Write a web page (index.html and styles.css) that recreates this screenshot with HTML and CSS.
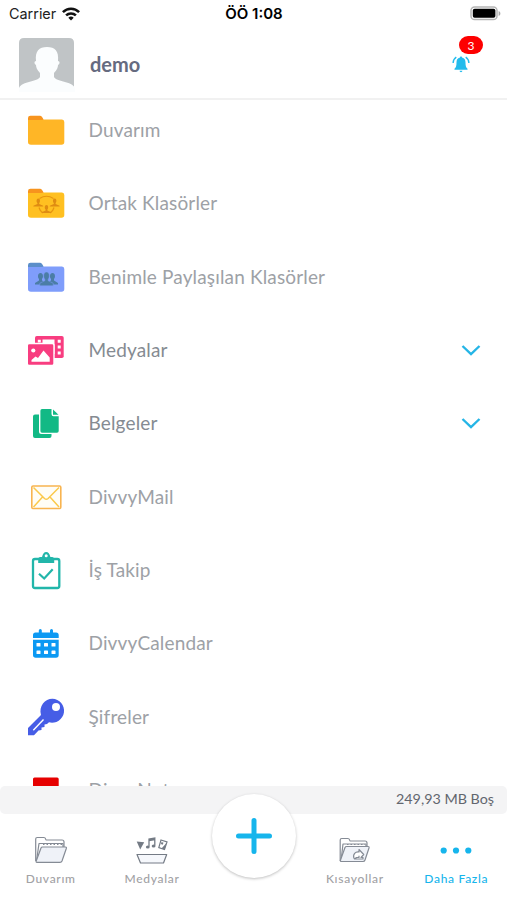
FILE: index.html
```html
<!DOCTYPE html>
<html lang="tr">
<head>
    <meta charset="UTF-8">
    <meta name="viewport" content="width=device-width, initial-scale=1.0">
    <title>Daha Fazla</title>
    <link rel="stylesheet" href="styles.css">
</head>
<body>
    <div class="app">
        <div class="status-bar">
            <div class="carrier">
                <span>Carrier</span>
                <svg width="18" height="14" viewBox="0 0 18 14">
                    <g fill="none" stroke="#111" stroke-width="2.5">
                        <path d="M.9 5.1C5.4.5 12.6.5 17.1 5.1"/>
                        <path d="M4.1 8.4C6.8 5.7 11.2 5.7 13.9 8.4"/>
                    </g>
                    <path fill="#111" d="M6.3 10.7Q9 8.3 11.7 10.7L9 13.6z"/>
                </svg>
            </div>
            <div class="time">ÖÖ 1:08</div>
            <div class="battery">
                <svg width="31" height="15" viewBox="0 0 31 15">
                    <rect x="1" y="1" width="26" height="12.6" rx="3.6" fill="#fff" stroke="#b5b5b5" stroke-width="1.5"/>
                    <rect x="2.8" y="2.8" width="22.6" height="9" rx="1.8" fill="#000"/>
                    <path fill="#aaa" d="M28.6 5v5c2.4-1 2.4-4 0-5z"/>
                </svg>
            </div>
        </div>

        <div class="header">
            <svg class="avatar" width="56" height="54" viewBox="0 0 56 54">
                <path fill="#c0c4c6" d="M0 51V5Q0 0 5 0H50Q55 0 55 5V51z"/>
                <path fill="#fbfdfe" d="M0 54V50C3 43 19 44 21 39V35C18 32 17 29 17 27C15 26 15 23 17 23C16 13 20 9 28 9S40 13 39 23C41 23 41 26 39 27C39 29 38 32 35 35V39C37 44 53 43 56 50V54z"/>
            </svg>
            <div class="username">demo</div>
            <div class="notification">
                <svg width="18" height="17" viewBox="0 0 18 17">
                    <g fill="#22bbec">
                        <path d="M9 .4C9.7.4 10 .8 10 1.4C12.7 2 13.5 4 13.5 6.5C13.5 10 14 11.5 15.5 12.8V13.8H2.5V12.8C4 11.5 4.5 10 4.5 6.5C4.5 4 5.3 2 8 1.4C8 .8 8.3.4 9 .4z"/>
                        <path d="M7.6 14.7H10.4C10.4 16.6 7.6 16.6 7.6 14.7z"/>
                    </g>
                    <path fill="none" stroke="#22bbec" stroke-width="1.4" d="M4.3 1.2C2.2 2.5 1.2 4.500 1.100 7M13.700 1.200C15.800 2.500 16.800 4.500 16.900 7"/>
                </svg>
                <span class="badge">3</span>
            </div>
        </div>

        <div class="content">
            <ul class="menu">
                <li>
                    <svg class="icon" viewBox="0 0 40 40">
                        <path fill="#f7941e" d="M2 12V8Q2 5.700 4.500 5.700H14Q16 5.700 17.500 9.500L18 12z"/>
                        <path fill="#ffb626" d="M2 10H15L18.500 9.500H36Q38.300 9.500 38.300 12V32Q38.300 34.700 35.500 34.700H5Q2 34.700 2 32z"/>
                    </svg>
                    <span>Duvarım</span>
                </li>
                <li>
                    <svg class="icon" viewBox="0 0 40 40">
                        <path fill="#f7941e" d="M2 12V8Q2 5.700 4.500 5.700H14Q16 5.700 17.500 9.500L18 12z"/>
                        <path fill="#ffc021" d="M2 10H15L18.500 9.500H36Q38.300 9.500 38.300 12V32Q38.300 34.700 35.500 34.700H5Q2 34.700 2 32z"/>
                        <path fill="none" stroke="#e8950f" stroke-width="1.200" d="M13.500 15.500Q20.500 11 27.500 15.500M13 24.500Q14 28.500 17 30M28 24.500Q27 28.500 24 30"/>
                        <g fill="#df8c12">
                            <path id="person" d="M12.300 15.500c2.200 0 2 3.500.9 4.500v1l4 1.700v.9h-9.800v-.9l4-1.700v-1c-1.100-1-1.300-4.500.9-4.500z"/>
                            <use href="#person" x="16.400"/>
                            <use href="#person" x="8.200" y="6.500"/>
                        </g>
                    </svg>
                    <span>Ortak Klasörler</span>
                </li>
                <li>
                    <svg class="icon" viewBox="0 0 40 40">
                        <path fill="#5b8ec9" d="M2 12V8Q2 5.700 4.500 5.700H14Q16 5.700 17.500 9.500L18 12z"/>
                        <path fill="#7f9dfb" d="M2 10H15L18.500 9.500H36Q38.300 9.500 38.300 12V32Q38.300 34.700 35.500 34.700H5Q2 34.700 2 32z"/>
                        <g fill="#4b7da6">
                            <path d="M14.500 16c3 0 3 4.500 1.500 6v1.500l3 1.500v2.500H9V26l4-2.500V22c-1.500-1.500-1.500-6 1.500-6z"/>
                            <path d="M26.500 16c-3 0-3 4.500-1.500 6v1.500L22 25v2.500h10V26l-4-2.500V22c1.500-1.500 1.500-6-1.500-6z"/>
                            <path stroke="#7f9dfb" stroke-width=".5" d="M20.500 15c3.500 0 3.400 5.500 1.700 7.200v1.600l5 2.400v2.600H13.800v-2.600l5-2.400v-1.600C17.100 20.500 17 15 20.500 15z"/>
                        </g>
                    </svg>
                    <span>Benimle Paylaşılan Klasörler</span>
                </li>
                <li class="dark">
                    <svg class="icon" viewBox="0 0 40 40">
                        <rect x="9" y="6" width="28.700" height="22" rx="1.800" fill="#f83d80"/>
                        <path fill="#fff" d="M16.500 9.500H28.500V24H25V14.500H16.500zM11.800 9.800h3v2.700h-3zM31.700 9.800h3v3h-3zM31.700 15.600h3v3h-3zM31.700 21.400h3v3h-3z"/>
                        <rect x="1.300" y="13.500" width="26.700" height="22" rx="2" fill="#f83d80" stroke="#fff" stroke-width="1.400"/>
                        <circle cx="7.300" cy="20.500" r="2.100" fill="#fff"/>
                        <path fill="#fff" d="M5.500 31.800V30L9.500 26.500L12 28L17.500 20.500L23.700 27.500V31.800z"/>
                    </svg>
                    <span>Medyalar</span>
                    <svg class="chevron" viewBox="0 0 20 12"><path d="M1.500 2L10 10L18.500 2"/></svg>
                </li>
                <li class="dark">
                    <svg class="icon" viewBox="0 0 40 40">
                        <path fill="#12b985" d="M9 11.500H13V28.500Q13 31 15.500 31H25.500V33Q25.500 35 23.500 35H9Q7 35 7 33V13.500Q7 11.500 9 11.500z"/>
                        <path fill="#12b985" d="M16 6H25.500V11Q25.500 13.300 27.500 13.300H32.700V28Q32.700 29.800 31 29.800H16Q14.400 29.800 14.400 28V7.800Q14.400 6 16 6z"/>
                        <path fill="#12b985" d="M27 6.500L32.500 11.800H27z"/>
                    </svg>
                    <span>Belgeler</span>
                    <svg class="chevron" viewBox="0 0 20 12"><path d="M1.500 2L10 10L18.500 2"/></svg>
                </li>
                <li>
                    <svg class="icon" viewBox="0 0 40 40">
                        <rect x="5.800" y="9" width="29" height="22.500" rx="1.300" fill="#fffdf6" stroke="#f8b450" stroke-width="1.600"/>
                        <path fill="none" stroke="#fbc94b" stroke-width="1.500" d="M7.500 10.500L18.500 21.500Q20.300 23 22.100 21.500L33 10.500M7.500 30L16.500 20M33 30L24 20"/>
                    </svg>
                    <span>DivvyMail</span>
                </li>
                <li>
                    <svg class="icon" viewBox="0 0 40 40">
                        <rect x="7" y="9" width="26.300" height="29" rx="2" fill="#fff" stroke="#22b6aa" stroke-width="2.300"/>
                        <path fill="#22b6aa" d="M12.200 13V9Q12.200 7.500 14 7H16C17 3.500 18 2 20.200 2S23.500 3.500 24.400 7H26.300Q28.200 7.500 28.200 9V13z"/>
                        <circle cx="20.200" cy="5.800" r="1.500" fill="#fff"/>
                        <path fill="none" stroke="#22b6aa" stroke-width="2.200" d="M13 23.800L18.200 28.500L26.700 19.300"/>
                    </svg>
                    <span>İş Takip</span>
                </li>
                <li>
                    <svg class="icon" viewBox="0 0 40 40">
                        <path fill="#0c99f3" d="M9.500 9.500H12.800V7.500Q12.800 6 14.300 6T15.800 7.500V9.500H24V7.500Q24 6 25.500 6T27 7.500V9.500H30Q32.700 9.500 32.700 12V15H7V12Q7 9.500 9.500 9.500zM7 16.700H32.700V32Q32.700 34.700 30 34.700H9.700Q7 34.700 7 32z"/>
                        <g fill="#fff">
                            <rect x="10.500" y="20" width="4" height="3.500" rx=".6"/>
                            <rect x="18" y="20" width="4" height="3.500" rx=".6"/>
                            <rect x="25.500" y="20" width="4" height="3.500" rx=".6"/>
                            <rect x="10.500" y="27.500" width="4" height="3.500" rx=".6"/>
                            <rect x="18" y="27.500" width="4" height="3.500" rx=".6"/>
                            <rect x="25.500" y="27.500" width="4" height="3.500" rx=".6"/>
                        </g>
                    </svg>
                    <span>DivvyCalendar</span>
                </li>
                <li>
                    <svg class="icon" viewBox="0 0 40 40">
                        <path fill="#465de6" d="M26.400 1.700A12 12 0 1 1 23 25.300L21 27L18.500 27.500V30L15.500 30.500V33L12.500 33.500L8 38.300H2V31L15 18C12.500 9 19 1.700 26.400 1.700z"/>
                        <circle cx="30" cy="10" r="4" fill="#fff"/>
                        <path stroke="#fff" stroke-width="1.400" d="M7.300 33.200L17.500 22.500"/>
                    </svg>
                    <span>Şifreler</span>
                </li>
                <li>
                    <svg class="icon" viewBox="0 0 40 40">
                        <rect x="7" y="7.500" width="25.700" height="27" rx="1.500" fill="#e60000"/>
                    </svg>
                    <span>DivvyNote</span>
                </li>
            </ul>
        </div>

        <div class="storage">249,93 MB Boş</div>

        <div class="tabs">
            <div class="tab">
                <svg viewBox="0 0 36 30">
                    <g fill="#fff" stroke="#858b95" stroke-width="1.200" stroke-linejoin="round">
                        <path d="M2.700 26V4Q2.700 2.500 4.200 2.500H11Q12.500 2.500 13 5H29Q31 5 31 7V12"/>
                        <path d="M3.500 26L6 8.500H30V14"/>
                        <path fill="#eff2f8" d="M9.500 12H32.500Q33.700 12 33.300 13.500L29 26Q28.500 27.300 27 27.300H4Q2.700 27.300 3.200 26L8 13Q8.400 12 9.500 12z"/>
                        <path stroke-dasharray="1.500 2" d="M10 9.500H29"/>
                    </g>
                </svg>
                <span>Duvarım</span>
            </div>
            <div class="tab">
                <svg viewBox="0 0 36 30">
                    <path fill="#747b85" d="M2.700 6.500L10.200 7.300L6.200 14.600z"/>
                    <path fill="none" stroke="#747b85" stroke-width="1.300" d="M15 11.500V4L20.800 3V10.500M15 5.500L20.800 4.500"/>
                    <ellipse cx="13.800" cy="12" rx="1.900" ry="1.500" fill="#747b85"/>
                    <ellipse cx="19.600" cy="11" rx="1.900" ry="1.500" fill="#747b85"/>
                    <path fill="#fff" stroke="#747b85" stroke-width="1.200" d="M27 5L33 7L30.500 14.500L24.800 12.600z"/>
                    <path fill="#747b85" d="M27.500 13.500L32.500 8L30.500 14.500zM27.500 7l2 .7-.8 2-1.800-.6z"/>
                    <path fill="#f6f8fc" stroke="#747b85" stroke-width="1.200" stroke-linejoin="round" d="M3 19.500H32.700L29.500 28H6.500z"/>
                </svg>
                <span>Medyalar</span>
            </div>
            <div class="tab tab-add">
                <button class="add-button" aria-label="Ekle">
                    <svg viewBox="0 0 40 40"><path d="M20 4.500V35.500M4.500 20H35.500"/></svg>
                </button>
            </div>
            <div class="tab">
                <svg viewBox="0 0 36 30">
                    <g fill="#fff" stroke="#858b95" stroke-width="1.200" stroke-linejoin="round">
                        <path d="M3.200 26V5Q3.200 3.500 4.700 3.500H11Q12.500 3.500 13 6H28Q30 6 30 8V12"/>
                        <path d="M4 26L6 9H29V13"/>
                        <path fill="#eff2f8" d="M9.500 11.500H31Q32.400 11.500 32 13L28 25Q27.500 26.500 26 26.500H4.500Q3 26.500 3.500 25L8 12.500Q8.400 11.500 9.500 11.500z"/>
                        <path stroke-dasharray="1.500 2" d="M10 9.500H28"/>
                        <path fill="#fff" d="M17 23.500C15.500 19 18.500 16.500 22 17V14.500L26.700 19.500L24 22.500H26V24H17.500L19.500 22.500H22V20.800"/>
                    </g>
                </svg>
                <span>Kısayollar</span>
            </div>
            <div class="tab active">
                <svg viewBox="0 0 36 30">
                    <g fill="#16b5ec">
                        <circle cx="5.700" cy="15.500" r="3.100"/>
                        <circle cx="18" cy="15.500" r="3.100"/>
                        <circle cx="30.300" cy="15.500" r="3.100"/>
                    </g>
                </svg>
                <span>Daha Fazla</span>
            </div>
        </div>
    </div>
</body>
</html>
```
FILE: styles.css
```css
* {
    box-sizing: border-box;
}
body {
    margin: 0;
    background: #fff;
    font-family: Lato, "Open Sans", sans-serif;
}
.app {
    display: flex;
    flex-direction: column;
    height: 900px;
    overflow: hidden;
}
.status-bar {
    display: grid;
    grid-template-columns: 1fr auto 1fr;
    align-items: center;
    height: 27px;
    padding: 0 6px 0 9px;
    font-family: Inter, sans-serif;
    font-size: 15px;
    color: #222;
}
.carrier {
    display: flex;
    align-items: center;
    gap: 6px;
    font-size: 14.4px;
}
.time {
    margin-left: -2px;
    font-weight: 600;
    color: #000;
}
.battery {
    display: flex;
    justify-content: flex-end;
}
.header {
    display: flex;
    align-items: center;
    height: 73px;
    padding: 4px 37px 0 19px;
    border-bottom: 2px solid #f1f1f1;
}
.avatar {
    display: block;
}
.username {
    flex: 1;
    margin: -1px 0 0 15px;
    font-size: 20px;
    font-weight: bold;
    color: #666b80;
}
.notification {
    position: relative;
    display: flex;
}
.badge {
    position: absolute;
    left: 7px;
    top: -20px;
    width: 24px;
    height: 18px;
    border-radius: 9px;
    background: #fd0000;
    color: #fff;
    font-size: 12px;
    line-height: 19px;
    text-align: center;
}
.content {
    flex: 1;
    min-height: 0;
    overflow: hidden;
}
.menu {
    list-style: none;
    margin: -6.7px 0 0;
    padding: 0;
}
.menu li {
    display: flex;
    align-items: center;
    height: 73.33px;
    padding: 0 26px;
    font-size: 19px;
    letter-spacing: 0.15px;
    color: #9da1a6;
}
.menu li.dark {
    color: #858b92;
}
.menu span {
    flex: 1;
    margin: -1px 0 0 22.5px;
}
.icon {
    width: 40px;
    height: 40px;
}
.chevron {
    width: 20px;
    height: 12px;
    fill: none;
    stroke: #25b5e6;
    stroke-width: 2.4;
}
.storage {
    height: 28px;
    padding-right: 13px;
    border-radius: 5px;
    background: #f4f4f5;
    color: #62666e;
    font-size: 14.3px;
    line-height: 26px;
    text-align: right;
}
.tabs {
    display: grid;
    grid-template-columns: repeat(5, 1fr);
    height: 86px;
}
.tab {
    display: flex;
    flex-direction: column;
    align-items: center;
    padding-top: 21px;
    font-size: 12px;
    font-weight: 500;
    letter-spacing: 0.7px;
    color: #a2a2a5;
}
.tab svg {
    width: 36px;
    height: 30px;
}
.tab span {
    margin-top: 6px;
}
.tab.active {
    color: #16b5ec;
}
.tab-add {
    padding-top: 0;
}
.add-button {
    display: flex;
    align-items: center;
    justify-content: center;
    flex-shrink: 0;
    width: 84px;
    height: 84px;
    margin: -20px 0 0 1px;
    padding: 0;
    border: 0;
    border-radius: 50%;
    background: #fff;
    box-shadow: 0 1px 3px rgba(0, 0, 0, 0.25);
}
.add-button svg {
    width: 40px;
    height: 40px;
    stroke: #16b5ec;
    stroke-width: 5;
    stroke-linecap: round;
}
```
